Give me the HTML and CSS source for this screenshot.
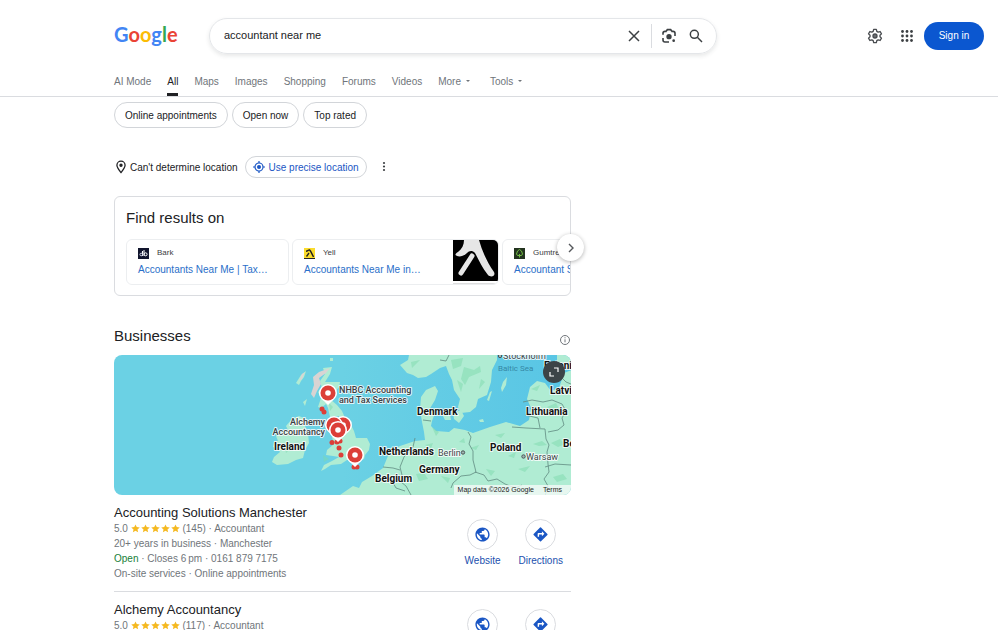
FILE: index.html
```html
<!DOCTYPE html>
<html lang="en-GB">
<head>
    <meta charset="UTF-8">
    <meta name="viewport" content="width=device-width, initial-scale=1.0">
    <title>accountant near me - Google Search</title>
    <link rel="stylesheet" href="styles.css">
</head>
<body>
    <!-- shared icons -->
    <svg class="sprite" aria-hidden="true">
        <symbol id="star" viewBox="0 0 24 24"><path d="M12 1l3.300 7.300 8 .8-6 5.300 1.700 7.900L12 18.200 5 22.300l1.700-7.900-6-5.300 8-.8z"/></symbol>
        <symbol id="globe" viewBox="0 0 24 24"><path d="M12 2C6.480 2 2 6.480 2 12s4.480 10 10 10 10-4.480 10-10S17.520 2 12 2zm-1 17.930c-3.950-.49-7-3.850-7-7.930 0-.62.080-1.210.210-1.790L9 15v1c0 1.100.9 2 2 2v1.930zm6.900-2.540c-.26-.81-1-1.390-1.900-1.390h-1v-3c0-.55-.45-1-1-1H8v-2h2c.55 0 1-.45 1-1V7h2c1.100 0 2-.9 2-2v-.41c2.930 1.190 5 4.060 5 7.410 0 2.080-.8 3.970-2.100 5.390z"/></symbol>
        <symbol id="directions" viewBox="0 0 24 24"><path d="M21.710 11.290l-9-9a1 1 0 0 0-1.410 0l-9 9a1 1 0 0 0 0 1.410l9 9a1 1 0 0 0 1.410 0l9-9a1 1 0 0 0 0-1.410zM14 14.500V12h-4v3H8v-4c0-.55.45-1 1-1h5V7.500l3.500 3.500-3.500 3.500z"/></symbol>
        <symbol id="pin" viewBox="0 0 18 22">
            <path d="M9 0a9 9 0 0 1 9 9c0 4-3 6.500-5.500 8.500L9 21l-3.500-3.500C3 15.500 0 13 0 9a9 9 0 0 1 9-9z" fill="#fff"/>
            <circle cx="9" cy="9" r="7.500" fill="#dc3f38"/>
            <circle cx="9" cy="9" r="2.800" fill="#fff"/>
        </symbol>
    </svg>

    <header class="header">
        <div class="top-bar">
            <a class="logo" href="#" aria-label="Google"><span class="blue">G</span><span class="red">o</span><span class="yellow">o</span><span class="blue">g</span><span class="green">l</span><span class="red">e</span></a>
            <form class="search-box">
                <input type="text" class="search-input" value="accountant near me" aria-label="Search">
                <button type="button" class="icon-button" aria-label="Clear">
                    <svg width="16" height="16" viewBox="0 0 24 24"><path d="M4.500 4.500l15 15m0-15l-15 15" stroke="#3c4043" stroke-width="2.200"/></svg>
                </button>
                <span class="search-divider"></span>
                <button type="button" class="icon-button" aria-label="Search by image">
                    <svg width="16" height="16" viewBox="0 0 24 24" fill="none" stroke="#3c4043" stroke-width="2.400"><path d="M3 10V8a3 3 0 0 1 3-3h2.500M15.500 5H18a3 3 0 0 1 3 3v4M3 15v3a3 3 0 0 0 3 3h6M8 4.500L9.500 2.500h5L16 4.500"/><circle cx="12" cy="13" r="4" fill="#3c4043" stroke="none"/><circle cx="19" cy="19" r="2" fill="#3c4043" stroke="none"/></svg>
                </button>
                <button type="submit" class="icon-button" aria-label="Search">
                    <svg width="16" height="16" viewBox="0 0 24 24" fill="none" stroke="#3c4043" stroke-width="2.200"><circle cx="9.500" cy="9.500" r="6"/><path d="M14 14l7 7"/></svg>
                </button>
            </form>
            <div class="account">
                <button class="icon-button" aria-label="Settings">
                    <svg width="16" height="16" viewBox="0 0 24 24" fill="none" stroke="#4a4d51" stroke-width="2"><path d="M10 2h4l.7 3 2 1.200 3-.9 2 3.500L19.500 11v2l2.200 2.200-2 3.500-3-.9-2 1.200-.7 3h-4l-.7-3-2-1.200-3 .9-2-3.500L4.500 13v-2L2.300 8.800l2-3.500 3 .9 2-1.200z" stroke-linejoin="round"/><circle cx="12" cy="12" r="3" fill="#6a6d71"/></svg>
                </button>
                <button class="icon-button" aria-label="Google apps">
                    <svg width="16" height="16" viewBox="0 0 16 16" fill="#3c4043"><circle cx="3.500" cy="3.500" r="1.400"/><circle cx="8" cy="3.500" r="1.400"/><circle cx="12.500" cy="3.500" r="1.400"/><circle cx="3.500" cy="8" r="1.400"/><circle cx="8" cy="8" r="1.400"/><circle cx="12.500" cy="8" r="1.400"/><circle cx="3.500" cy="12.500" r="1.400"/><circle cx="8" cy="12.500" r="1.400"/><circle cx="12.500" cy="12.500" r="1.400"/></svg>
                </button>
                <button class="sign-in">Sign in</button>
            </div>
        </div>
        <nav class="tabs">
            <a href="#">AI Mode</a>
            <a href="#" class="active">All</a>
            <a href="#">Maps</a>
            <a href="#">Images</a>
            <a href="#">Shopping</a>
            <a href="#">Forums</a>
            <a href="#">Videos</a>
            <button class="dropdown">More</button>
            <button class="dropdown">Tools</button>
        </nav>
    </header>

    <main class="results">
        <div class="chips">
            <button class="chip">Online appointments</button>
            <button class="chip">Open now</button>
            <button class="chip">Top rated</button>
        </div>

        <div class="location">
            <svg width="14" height="14" viewBox="0 0 24 24" fill="none" stroke="#202124" stroke-width="2.200"><path d="M12 21.500C8 16.500 5 13 5 9a7 7 0 0 1 14 0c0 4-3 7.500-7 12.500z"/><circle cx="12" cy="9" r="1.800" fill="#202124"/></svg>
            <span>Can't determine location</span>
            <button class="precise">
                <svg width="12" height="12" viewBox="0 0 24 24" fill="none" stroke="#1a56c4" stroke-width="2.400"><circle cx="12" cy="12" r="8"/><circle cx="12" cy="12" r="4" fill="#1a56c4" stroke="none"/><path d="M12 0v4m0 16v4M0 12h4m16 0h4"/></svg>
                Use precise location
            </button>
            <button class="icon-button" aria-label="More options">
                <svg width="10" height="12" viewBox="0 0 10 12" fill="#3c4043"><circle cx="5" cy="2" r="1.100"/><circle cx="5" cy="5.500" r="1.100"/><circle cx="5" cy="9" r="1.100"/></svg>
            </button>
        </div>

        <section class="find-card">
            <h2>Find results on</h2>
            <div class="carousel">
                <a class="site" href="#">
                    <span class="site-text">
                        <span class="site-name">
                            <svg width="11" height="11" viewBox="0 0 11 11"><rect width="11" height="11" fill="#11152d"/><path d="M4.500 3v5M6 2v6" stroke="#fff"/><circle cx="3.200" cy="6.500" r="1.300" fill="none" stroke="#c9cce0"/><circle cx="7.600" cy="6.300" r="1.500" fill="none" stroke="#fff"/></svg>
                            Bark
                        </span>
                        <span class="site-link">Accountants Near Me | Tax…</span>
                    </span>
                </a>
                <a class="site yell" href="#">
                    <span class="site-text">
                        <span class="site-name">
                            <svg width="11" height="11" viewBox="0 0 11 11"><rect width="11" height="11" fill="#fbdc2d"/><path d="M2 3.200c2 0 2.500-1.700 3.500-1.200S8 6 9.500 9M5 5L2.500 8.500" fill="none" stroke="#222" stroke-width="1.400"/><path d="M0 10.500h11" stroke="#222"/></svg>
                            Yell
                        </span>
                        <span class="site-link">Accountants Near Me in…</span>
                    </span>
                    <svg class="site-thumb" width="45" height="44" viewBox="0 0 45 44">
                        <rect width="45" height="41" fill="#000"/>
                        <path d="M0 43.500h45" stroke="#ddd"/>
                        <path d="M11 0h15c3 11 8 22 15 32 2 4-3 6-6 3C29 28 26 20 22 13c-3-3-6-2-8 0-3 3-7 4-10 3-3-1-1-3 1-4 4-3 6-7 6-12z" fill="#e6e6e6"/>
                        <path d="M19 16L8 33" stroke="#e6e6e6" stroke-width="5" stroke-linecap="round"/>
                    </svg>
                </a>
                <a class="site" href="#">
                    <span class="site-text">
                        <span class="site-name">
                            <svg width="11" height="11" viewBox="0 0 11 11"><rect width="11" height="11" fill="#23331f"/><path d="M5.500 1.500l2 1.500 1 3-1 1.500h-4L2.500 6l1-3zM5.500 6v3.500" fill="none" stroke="#72bd44"/></svg>
                            Gumtree
                        </span>
                        <span class="site-link">Accountant Services</span>
                    </span>
                </a>
            </div>
            <button class="next" aria-label="Next">
                <svg width="12" height="12" viewBox="0 0 12 12"><path d="M4 2l4 4-4 4" fill="none" stroke="#55585c" stroke-width="1.400"/></svg>
            </button>
        </section>

        <div class="section-head">
            <h2>Businesses</h2>
            <svg width="12" height="12" viewBox="0 0 12 12" fill="none" stroke="#70757a"><circle cx="6" cy="6" r="4.500"/><path d="M6 5.300v3M6 3.300v1"/></svg>
        </div>

        <div class="map">
            <svg class="map-art" viewBox="0 0 457 140" preserveAspectRatio="xMidYMid slice" role="img" aria-label="Map of businesses">
                <defs>
                    <linearGradient id="sea" x1="0" x2="1"><stop offset=".5" stop-color="#6bd1e4"/><stop offset="1" stop-color="#58c5e5"/></linearGradient>
                </defs>
                <rect width="457" height="140" fill="url(#sea)"/>
                <g fill="#b0ecd3">
                    <!-- Great Britain -->
                    <path d="M209 13l9-1-2 7-5 8 15 0-1 5-4 5-5 7 7 6 5 6 3 7 6 7 3 6 2 7 11 0 3 6-1 6-4 5-1 4-8 2-9-1-6 4-10 1-6 4-4 2 3-6 8-4 7-4-6-1-7-1 1-5 7-6-2-7 9-4-3-8 1-9-9 1-2-9-2-4-5 4-3-1 3-9-3-6 4-4-2-7 5-7z"/>
                    <!-- Ireland -->
                    <path d="M178 64l7-3 7 3-1 7 3 8 1 9-4 7-2 8-7 2-8 4-11 1-5-3 2-5 6-5-2-3-5-2 1-5 4-1-2-5 7-3 5-3-2-4z"/>
                    <path d="M187 20l5-4-2 6-3 4-2 4-3-2zM189 47l4-3-2 7z"/>
                    <path d="M216 3l3 0 0 3-3 0z"/>
                    <!-- Norway, Sweden -->
                    <path d="M286 10l8-5 1-5h88l0 5-5 10-1 12-4 13-9 4-2 8-6 5-9 1-3-6 2-8-6-9-2-10-3-6-3-8-6 2-9 6-5 3-8 1-5-3-6-2z"/>
                    <path d="M389 27l4-5-1 8-4 7-1-4zM373 45l3-8 2-1-3 10z"/>
                    <!-- mainland -->
                    <path d="M226 140l13-9 6 2 3-6 10-6 11-8 7-17 10-5 15-5 10-1-1-8-2-10-2-13 1-12 5-7 9-4 3 5-3 9-6 10 6 3-3 8-1 5 5 5 13 1 5-4 11 2 8 3 17-6 16-5 14 4 9-6 2-12-4-9 3-12 7-6 8 2 6 8 8-3 5-15 15-6V140z"/>
                    <path d="M328 59l8 0 1 6-6 0zM339 58l8-3 3 6-5 7-5-4zM365 65l4-1 1 3-4 0z"/>
                    <path d="M432 9l8-3 3 6-8 2zM443 0h14v14l-14-3z"/>
                </g>
                <!-- forest and high ground -->
                <g fill="#7edaae" opacity=".5">
                    <path d="M337 5l12-2-2 8-8 3zM350 12l10 3 6-4 1 6-12 5-4 8-4-6zM367 24l4 3-6 7zM343 25l6 4-2 8zM297 7l9-2-8 8zM318 72l7 5-3 4zM311 90l8-2-2 5zM284 119l9 4-4 6zM302 119l8-1 4 6-9 2zM327 121l9 2-2 5zM345 87l5-4 1 5zM356 93l9-3-3 5zM381 80l10-2-4 5zM394 101l8-4-2 6zM372 114l9 2-4 5zM404 114l12-3-5 6zM419 89l9-3 5 4-8 1zM433 52l9-4 3 6-8 2zM417 34l9-4-3 6zM437 88l9-4 5 5-7 3zM439 122l10-3 4 5-10 3zM422 56l8-2-2 7zM215 48l4 4-3 4zM228 67l3 5-4 2zM209 100l6 4-5 3zM171 91l6 2-5 5z"/>
                </g>
                <path d="M205 17l11-4-4 5-7 5 2 6-4 7-3 7-3-4 3-9-1-8zM188 19l3-2-3 7-3 2z" fill="#d9d4d3"/>
                <g fill="none" stroke="#618b82" stroke-width=".8">
                    <path d="M326 5l6 1 3-6M309 65l8 1M354 77l3 5-2 7 4 7 0 9 3 12-6 3-9 1-8 7-2 5M361 117l9 3 4 6 9-2 8 5 10 4 7-3M398 72l14 1 19 1 1 10 3 6-2 7 1 12 1 8-5 7 4 7-3 10M409 47l9-2 11 2 9-2 10 4 4 7-4 7 2 7-6 5-10 2M411 60l13 3 2 10M431 112l10-3 16 1M301 83l-2 9-9 10-4 10 2 8-1 7 5 4 5 9M269 112l10 1 7 2M271 124l7 2 4 7 9 3M449 15l-2 7 5 5 5 2"/>
                </g>
                <g class="city-labels">
                    <text x="389" y="4">Stockholm</text>
                    <text x="324" y="101">Berlin</text>
                    <text x="412" y="105">Warsaw</text>
                </g>
                <g fill="#9fb5b0" stroke="#4c5658"><circle cx="386" cy="1" r="1.700"/><circle cx="349" cy="97.500" r="1.700"/><circle cx="409.500" cy="101.500" r="1.700"/></g>
                <text x="384" y="16" class="sea-label">Baltic Sea</text>
                <g class="country-labels">
                    <text x="160" y="95">Ireland</text>
                    <text x="303" y="60">Denmark</text>
                    <text x="265" y="100">Netherlands</text>
                    <text x="261" y="127">Belgium</text>
                    <text x="305" y="118">Germany</text>
                    <text x="376" y="96">Poland</text>
                    <text x="412" y="60">Lithuania</text>
                    <text x="436" y="39">Latvia</text>
                    <text x="449" y="92">Belarus</text>
                    <text x="430" y="14">Estonia</text>
                </g>
                <g class="place-labels">
                    <text x="225" y="38">NHBC Accounting</text>
                    <text x="225" y="48">and Tax Services</text>
                    <text x="211" y="70" text-anchor="end">Alchemy</text>
                    <text x="211" y="80" text-anchor="end">Accountancy</text>
                </g>
                <g fill="#dc3f38">
                    <circle cx="208" cy="54" r="2.500"/><circle cx="210" cy="57" r="2.500"/><circle cx="218" cy="87.500" r="2.500"/><circle cx="223" cy="87" r="2.500"/><circle cx="226" cy="86" r="2.500"/><circle cx="225" cy="93" r="2.500"/><circle cx="227" cy="100" r="2.500"/><circle cx="240" cy="112" r="2.500"/><circle cx="243" cy="112" r="2.500"/>
                </g>
                <use href="#pin" x="205" y="29" width="18" height="22"/>
                <use href="#pin" x="220" y="61" width="18" height="22"/>
                <use href="#pin" x="211" y="61" width="18" height="22"/>
                <use href="#pin" x="215" y="66" width="18" height="22"/>
                <use href="#pin" x="232" y="91" width="18" height="22"/>
            </svg>
            <button class="expand" aria-label="Expand map">
                <svg width="12" height="12" viewBox="0 0 12 12" fill="none" stroke="#fff" stroke-width="1.200"><path d="M6 2h4v4M2 6v4h4"/></svg>
            </button>
            <div class="map-credit"><span>Map data ©2026 Google</span><a href="#">Terms</a></div>
        </div>

        <article class="business">
            <div class="details">
                <h3>Accounting Solutions Manchester</h3>
                <p>5.0 <span class="stars"><svg><use href="#star"/></svg><svg><use href="#star"/></svg><svg><use href="#star"/></svg><svg><use href="#star"/></svg><svg><use href="#star"/></svg></span> (145) · Accountant</p>
                <p>20+ years in business · Manchester</p>
                <p><span class="open">Open</span> · Closes 6&#8239;pm · 0161 879 7175</p>
                <p>On-site services · Online appointments</p>
            </div>
            <div class="actions">
                <a href="#"><span class="circle"><svg><use href="#globe"/></svg></span>Website</a>
                <a href="#"><span class="circle"><svg><use href="#directions"/></svg></span>Directions</a>
            </div>
        </article>

        <article class="business">
            <div class="details">
                <h3>Alchemy Accountancy</h3>
                <p>5.0 <span class="stars"><svg><use href="#star"/></svg><svg><use href="#star"/></svg><svg><use href="#star"/></svg><svg><use href="#star"/></svg><svg><use href="#star"/></svg></span> (117) · Accountant</p>
            </div>
            <div class="actions">
                <a href="#"><span class="circle"><svg><use href="#globe"/></svg></span>Website</a>
                <a href="#"><span class="circle"><svg><use href="#directions"/></svg></span>Directions</a>
            </div>
        </article>
    </main>
</body>
</html>
```
FILE: styles.css
```css
* {
    box-sizing: border-box;
}
body {
    margin: 0;
    height: 100vh;
    overflow: hidden;
    background-color: #fff;
    color: #202124;
    font-family: "Liberation Sans", Arial, sans-serif;
    font-size: 10px;
}
a {
    text-decoration: none;
    color: inherit;
}
button {
    font: inherit;
    color: inherit;
    background: none;
    border: none;
    padding: 0;
    cursor: pointer;
}
h2, h3, p {
    margin: 0;
    font-weight: normal;
}
svg {
    flex-shrink: 0;
}
.sprite {
    position: absolute;
    width: 0;
    height: 0;
}

/* Header */
.header {
    margin-right: 10px;
    padding-left: 114px;
    border-bottom: 1px solid #dadce0;
}
.top-bar {
    display: flex;
    align-items: center;
    padding: 18px 14px 0 0;
}
.logo {
    width: 95px;
    padding-bottom: 4px;
    font-family: Lato, sans-serif;
    font-size: 20px;
    line-height: 32px;
    font-weight: 700;
}
.blue { color: #4285f4; }
.red { color: #ea4335; }
.yellow { color: #fbbc05; }
.green { color: #34a853; }
.search-box {
    flex: 0 1 508px;
    height: 36px;
    display: flex;
    align-items: center;
    gap: 11px;
    padding: 0 12px 0 14px;
    border: 1px solid #e4e6e9;
    border-radius: 18px;
    box-shadow: 0 2px 4px rgba(60, 64, 67, .12);
}
.search-input {
    flex: 1;
    min-width: 0;
    border: none;
    outline: none;
    padding: 0 0 2px;
    font: inherit;
    font-size: 11px;
    color: #202124;
}
.icon-button {
    display: flex;
}
.search-divider {
    width: 1px;
    height: 24px;
    margin: 0 -2px 0 -2px;
    background-color: #dadce0;
}
.account {
    display: flex;
    align-items: center;
    gap: 16px;
    margin-left: auto;
}
.sign-in {
    height: 28px;
    width: 60px;
    margin-left: -7px;
    padding-bottom: 2px;
    border-radius: 14px;
    background-color: #0b57d0;
    color: #fff;
}
.tabs {
    display: flex;
    gap: 16px;
    height: 42px;
    color: #70757a;
}
.tabs a, .tabs button {
    display: flex;
    align-items: center;
    padding-top: 12px;
}
.tabs .active {
    color: #202124;
    border-bottom: 3px solid #202124;
    padding-top: 15px;
}
.dropdown::after {
    content: "";
    margin-left: 5px;
    border: 2px solid transparent;
    border-top-color: #70757a;
    border-bottom: none;
}
.dropdown + .dropdown {
    margin-left: 4px;
}

/* Results column */
.results {
    max-width: 571px;
    padding-left: 114px;
}
.chips {
    display: flex;
    gap: 4px;
    padding-top: 5px;
}
.chip {
    height: 26px;
    padding: 0 10px;
    border: 1px solid #d2d5d9;
    border-radius: 13px;
}
.location {
    display: flex;
    align-items: center;
    gap: 2px;
    margin: 28px 0 18px;
}
.precise {
    display: flex;
    align-items: center;
    gap: 4px;
    height: 22px;
    margin: 0 10px 0 5px;
    padding: 0 7px;
    border: 1px solid #d2d5d9;
    border-radius: 11px;
    color: #1a56c4;
}
.find-card {
    position: relative;
    height: 100px;
    padding: 11px 0 0 11px;
    border: 1px solid #dadce0;
    border-radius: 6px;
}
h2 {
    font-size: 15px;
    line-height: 20px;
}
.carousel {
    display: flex;
    gap: 3px;
    margin-top: 11px;
    overflow: hidden;
}
.site {
    display: flex;
    flex: 0 0 163px;
    height: 46px;
    overflow: hidden;
    border: 1px solid #eceef0;
    border-radius: 6px;
}
.yell {
    flex-basis: 207px;
}
.site-text {
    flex: 1;
    padding: 7px 0 0 11px;
    white-space: nowrap;
}
.site-name {
    display: flex;
    align-items: center;
    gap: 8px;
    font-size: 8px;
    line-height: 12px;
    color: #3c4043;
}
.site-link {
    display: block;
    margin-top: 4px;
    line-height: 14px;
    color: #2a6fc9;
}
.next {
    position: absolute;
    right: -14px;
    top: 37px;
    width: 27px;
    height: 27px;
    display: flex;
    align-items: center;
    justify-content: center;
    border-radius: 50%;
    background-color: #fff;
    box-shadow: 0 1px 4px rgba(0, 0, 0, .3);
}
.section-head {
    display: flex;
    justify-content: space-between;
    align-items: flex-end;
    margin: 30px 0 9px;
}

/* Map */
.map {
    position: relative;
    height: 140px;
    border-radius: 8px;
    overflow: hidden;
}
.map-art {
    display: block;
    width: 100%;
    height: 100%;
    font-family: Roboto, sans-serif;
}
.map-art text {
    paint-order: stroke;
    stroke: #fff;
    stroke-width: 2px;
    stroke-opacity: .8;
    stroke-linejoin: round;
}
.country-labels {
    font-size: 10px;
    font-weight: 700;
    fill: #111;
}
.city-labels {
    font-size: 9px;
    fill: #3c4648;
}
.map-art .sea-label {
    font-size: 8px;
    fill: #3689a6;
    stroke: none;
}
.place-labels {
    font-size: 9px;
    font-weight: 500;
    fill: #3c4043;
}
.expand {
    position: absolute;
    top: 6px;
    right: 6px;
    width: 22px;
    height: 22px;
    display: flex;
    align-items: center;
    justify-content: center;
    border-radius: 50%;
    background-color: #3c4447;
}
.map-credit {
    position: absolute;
    right: 0;
    bottom: 0;
    display: flex;
    gap: 9px;
    padding: 0 9px 0 4px;
    background-color: rgba(245, 250, 248, .8);
    font-size: 7px;
    line-height: 10px;
    color: #222;
}

/* Business listings */
.business {
    display: flex;
    justify-content: space-between;
    padding: 10px 0 10px;
    border-bottom: 1px solid #dadce0;
    color: #70757a;
}
.business h3 {
    font-size: 13px;
    line-height: 16px;
    color: #202124;
}
.business p {
    line-height: 15px;
}
.stars {
    display: inline-flex;
    vertical-align: -1px;
}
.stars svg {
    width: 9px;
    height: 9px;
    margin-right: 1px;
    fill: #f5b921;
}
.stars svg:last-child {
    margin-right: 0;
}
.open {
    color: #188038;
}
.actions {
    display: flex;
    gap: 18px;
    padding: 14px 8px 0 0;
    color: #1a4fae;
}
.business + .business .actions {
    padding-top: 7px;
}
.actions a {
    display: flex;
    flex-direction: column;
    align-items: center;
    gap: 5px;
    line-height: 12px;
}
.circle {
    display: flex;
    align-items: center;
    justify-content: center;
    width: 31px;
    height: 31px;
    border: 1px solid #dadce0;
    border-radius: 50%;
}
.circle svg {
    width: 17px;
    height: 17px;
    fill: #1a56c4;
}
```
